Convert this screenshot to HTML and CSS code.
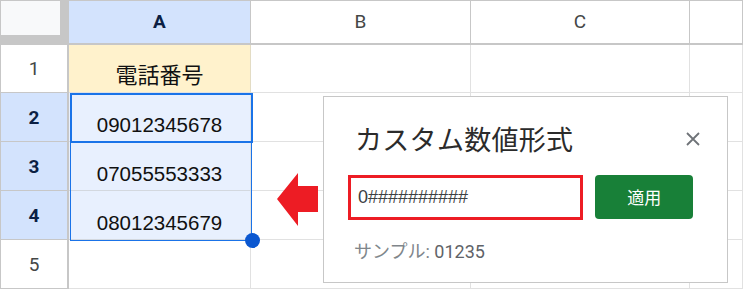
FILE: index.html
```html
<!DOCTYPE html>
<html lang="ja">
<head>
<meta charset="utf-8">
<link rel="stylesheet" href="styles.css">
</head>
<body>
<div class="sheet">
  <div class="corner"><div class="corner-inner"></div></div>
  <div class="colhead sel">A</div>
  <div class="colhead">B</div>
  <div class="colhead">C</div>
  <div class="colhead"></div>

  <div class="rowhead first">1</div>
  <div class="cell hl first">電話番号</div>
  <div class="cell first"></div>
  <div class="cell first"></div>
  <div class="cell first"></div>

  <div class="rowhead sel">2</div>
  <div class="cell range">09012345678</div>
  <div class="cell"></div>
  <div class="cell"></div>
  <div class="cell"></div>

  <div class="rowhead sel">3</div>
  <div class="cell range">07055553333</div>
  <div class="cell"></div>
  <div class="cell"></div>
  <div class="cell"></div>

  <div class="rowhead sel">4</div>
  <div class="cell range">08012345679</div>
  <div class="cell"></div>
  <div class="cell"></div>
  <div class="cell"></div>

  <div class="rowhead">5</div>
  <div class="cell"></div>
  <div class="cell"></div>
  <div class="cell"></div>
  <div class="cell"></div>

  <div class="range-box"></div>
  <div class="active-box"></div>
  <div class="handle"></div>

  <svg class="arrow" width="42" height="54" viewBox="0 0 42 54">
    <polygon points="0,26 21,0 21,13 41,13 41,39 21,39 21,53" fill="#ed1c24"/>
  </svg>

  <div class="dialog">
    <div class="dlg-head">
      <div class="dlg-title">カスタム数値形式</div>
      <svg class="close" width="14" height="14" viewBox="0 0 14 14">
        <path d="M1 1 L13 13 M13 1 L1 13" stroke="#6f7378" stroke-width="1.8" fill="none"/>
      </svg>
    </div>
    <div class="dlg-row">
      <div class="input">0##########</div>
      <div class="apply">適用</div>
    </div>
    <div class="sample">サンプル: <span class="sample-val">01235</span></div>
  </div>
</div>
</body>
</html>
```

FILE: styles.css
```css
html, body {
  margin: 0;
  padding: 0;
  background: #ffffff;
}
body {
  width: 744px;
  height: 291px;
  overflow: hidden;
  font-family: "Liberation Sans", Arial, "Noto Sans CJK JP", sans-serif;
}
.sheet {
  position: relative;
  display: grid;
  grid-template-columns: 68px 182px 220px 219px 53px;
  grid-template-rows: 44px 48px 49px 49px 49px 49px;
  border-top: 1px solid #c7c7c7;
  border-left: 1px solid #c7c7c7;
  width: 742px;
}
.corner {
  background: #c7c7c7;
}
.corner-inner {
  width: 59px;
  height: 34px;
  background: #f8f9fa;
}
.colhead {
  box-sizing: border-box;
  border-right: 1px solid #c7c7c7;
  border-bottom: 2px solid #c7c7c7;
  display: flex;
  align-items: center;
  justify-content: center;
  font-family: Roboto, "Liberation Sans", sans-serif;
  font-size: 19px;
  color: #444746;
  padding-bottom: 1px;
}
.colhead.sel {
  background: #d3e3fd;
  color: #0b1f44;
  font-weight: 700;
}
.rowhead {
  box-sizing: border-box;
  border-right: 2px solid #c7c7c7;
  border-bottom: 1px solid #c7c7c7;
  display: flex;
  align-items: center;
  justify-content: center;
  font-family: Roboto, "Liberation Sans", sans-serif;
  font-size: 19px;
  color: #444746;
}
.rowhead.sel {
  background: #d3e3fd;
  color: #0b1f44;
  font-weight: 700;
}
.cell {
  box-sizing: border-box;
  border-right: 1px solid #e1e1e1;
  border-bottom: 1px solid #e1e1e1;
  display: flex;
  align-items: flex-end;
  justify-content: center;
  font-size: 20.5px;
  color: #111111;
  padding-bottom: 4px;
}
.cell.hl {
  background: #fff2cc;
  border-right-color: #e3dcc4;
  font-size: 22px;
  padding-bottom: 3px;
}
.cell.range {
  background: #e8f0fe;
  border-bottom-color: #d3d8df;
}
.range-box {
  position: absolute;
  left: 69px;
  top: 92px;
  width: 182px;
  height: 148px;
  box-sizing: border-box;
  border: 1px solid #1a73e8;
}
.active-box {
  position: absolute;
  left: 69px;
  top: 92px;
  width: 183px;
  height: 50px;
  box-sizing: border-box;
  border: 2px solid #1a73e8;
}
.handle {
  position: absolute;
  left: 244px;
  top: 232px;
  width: 15px;
  height: 15px;
  border-radius: 50%;
  background: #0b57d0;
}
.arrow {
  position: absolute;
  left: 276px;
  top: 172px;
}
.dialog {
  position: absolute;
  left: 322px;
  top: 95px;
  width: 405px;
  height: 187px;
  box-sizing: border-box;
  border: 1px solid #c7c7c7;
  background: #ffffff;
  padding: 22px 34px 0 24px;
  display: flex;
  flex-direction: column;
  font-family: Roboto, "Noto Sans CJK JP", sans-serif;
}
.dlg-head {
  display: flex;
  align-items: center;
  justify-content: space-between;
  padding-left: 7px;
}
.dlg-title {
  font-family: "Noto Sans CJK JP", sans-serif;
  font-size: 27px;
  line-height: 40px;
  color: #2b2b2b;
  letter-spacing: 0.3px;
}
.close {
  margin-right: -7px;
}
.dlg-row {
  display: flex;
  align-items: center;
  gap: 12px;
  margin-top: 16px;
}
.input {
  box-sizing: border-box;
  width: 236px;
  height: 45px;
  border: 3px solid #ed1c24;
  display: flex;
  align-items: center;
  padding-left: 7px;
  font-size: 18px;
  color: #3c4043;
  font-family: "Liberation Sans", Arial, sans-serif;
}
.apply {
  width: 98px;
  height: 44px;
  border-radius: 4px;
  background: #188038;
  color: #ffffff;
  display: flex;
  align-items: center;
  justify-content: center;
  font-family: "Noto Sans CJK JP", sans-serif;
  font-size: 17px;
  margin-top: -2px;
}
.sample {
  margin-top: 17px;
  padding-left: 6px;
  font-size: 18px;
  color: #80868b;
  font-family: Roboto, "Noto Sans CJK JP", sans-serif;
}
.sample-val {
  color: #5f6368;
}
```
